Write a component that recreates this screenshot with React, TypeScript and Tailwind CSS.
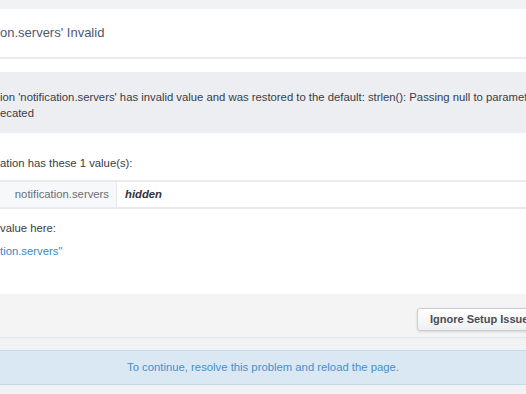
export default function App() {
  return (
    <div
      className="w-[526px] h-[394px] overflow-hidden bg-[#f1f2f4] pt-[9px] flex flex-col"
      style={{ fontFamily: '"Liberation Sans", Arial, sans-serif' }}
    >
      {/* Issue panel */}
      <div className="bg-white">
        {/* Header */}
        <div className="h-[50px] flex items-center border-b-2 border-[#e9ecef] text-[13px] text-[#4c5873] whitespace-nowrap">
          on.servers' Invalid
        </div>

        {/* Body */}
        <div className="pt-[13px]">
          <div className="h-[61px] bg-[#eceef1] pt-[17px] text-[11.3px] leading-[16px] text-[#383d47] whitespace-nowrap">
            <div>
              ion 'notification.servers' has invalid value and was restored to the default: strlen(): Passing null to parameter #1
            </div>
            <div>ecated</div>
          </div>

          <div className="mt-[22px] text-[11.3px] leading-[16px] text-[#383d47] whitespace-nowrap">
            ation has these 1 value(s):
          </div>

          <div className="mt-[9px] h-[29px] flex border-y-2 border-[#e9ebee] text-[11.3px] whitespace-nowrap">
            <div className="w-[117px] flex items-center justify-end pr-[7px] bg-[#f7f8fa] border-r border-[#e6e8eb] text-[#6a6e76]">
              notification.servers
            </div>
            <div className="flex items-center pl-[8px] font-bold italic text-[#2f333a]">hidden</div>
          </div>

          <div className="mt-[11px] text-[11.3px] leading-[16px] text-[#383d47] whitespace-nowrap">
            value here:
          </div>
          <div className="mt-[7px] pb-[35px] text-[11.3px] leading-[16px] text-[#3d86c8] whitespace-nowrap">
            tion.servers"
          </div>
        </div>

        {/* Footer with action */}
        <div className="h-[44px] bg-[#f4f4f5] border-b border-[#e3e5e8] pt-[12px] pl-[417px] whitespace-nowrap">
          <button className="h-[23px] px-[12px] rounded-[3px] border border-[#c9ccd1] bg-gradient-to-b from-white to-[#eff0f2] text-[11px] font-bold text-[#4a4d52] shadow-sm">
            Ignore Setup Issue
          </button>
        </div>
      </div>

      {/* Notice */}
      <div className="mt-[12px] h-[35px] flex items-center justify-center bg-[#d9e8f3] border-y border-[#c4daea] text-[11.3px] text-[#4a8fca] whitespace-nowrap">
        To continue, resolve this problem and reload the page.
      </div>
    </div>
  );
}
